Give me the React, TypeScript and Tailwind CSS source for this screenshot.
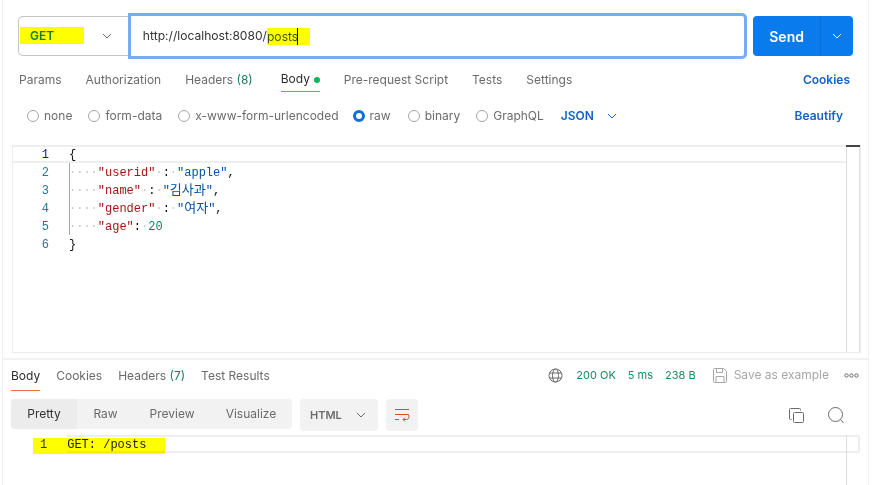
import React from "react";

const mono = "font-['Liberation_Mono','Noto_Sans_CJK_KR',monospace]";

function Chevron({ className = "" }: { className?: string }) {
  return (
    <svg width="10" height="6" viewBox="0 0 10 6" fill="none" className={className}>
      <path d="M1 1l4 4 4-4" stroke="currentColor" strokeWidth="1" />
    </svg>
  );
}

function Radio({ label, checked }: { label: string; checked?: boolean }) {
  return (
    <div className="flex items-center gap-[5px]">
      {checked ? (
        <span className="w-3 h-3 rounded-full border-[3px] border-[#0d6fdc] bg-white" />
      ) : (
        <span className="w-3 h-3 rounded-full border border-[#a6a6a6] bg-white" />
      )}
      <span>{label}</span>
    </div>
  );
}

const Dots = ({ n }: { n: number }) => <span className="text-[#c8c8c8]">{"·".repeat(n)}</span>;
const K = ({ t }: { t: string }) => <span className="text-[#a31515]">{t}</span>;
const S = ({ t }: { t: string }) => <span className="text-[#0451a5]">{t}</span>;
const H = ({ t }: { t: string }) => <span className="text-[#0451a5] text-[13px] leading-[18px]">{t}</span>;

const lines: React.ReactNode[] = [
  <span>{"{"}</span>,
  <>
    <Dots n={4} />
    <K t={'"userid"'} />
    <Dots n={1} />:<Dots n={1} />
    <S t={'"apple"'} />,
  </>,
  <>
    <Dots n={4} />
    <K t={'"name"'} />
    <Dots n={1} />:<Dots n={1} />
    <S t={'"'} />
    <H t="김사과" />
    <S t={'"'} />,
  </>,
  <>
    <Dots n={4} />
    <K t={'"gender"'} />
    <Dots n={1} />:<Dots n={1} />
    <S t={'"'} />
    <H t="여자" />
    <S t={'"'} />,
  </>,
  <>
    <Dots n={4} />
    <K t={'"age"'} />:<Dots n={1} />
    <span className="text-[#098658]">20</span>
  </>,
  <span>{"}"}</span>,
];

export default function App() {
  return (
    <div className="relative w-[878px] h-[485px] bg-white overflow-hidden font-['Inter',sans-serif] text-[#6b6b6b]">
      <div className="ml-[2px] w-[867px] h-full border-x border-[#f0f0f0]">
        {/* request bar */}
        <div className="flex pl-[15px] pr-[15px] pt-[13px] h-[59px]">
          <div className="flex items-center w-[110px] h-[40px] mt-[3px] border border-r-0 border-[#c4c4c4] rounded-l-[5px]">
            <span className="ml-[1px] mt-[-2px] w-[64px] h-[17px] bg-[#ffff00] pl-[10px] text-[12px] leading-[17px] font-semibold text-[#0f7f2d]">
              GET
            </span>
            <Chevron className="ml-[18px] text-[#6b6b6b]" />
          </div>
          <div className="flex items-center w-[620px] h-[46px] pl-[12px] border-[3px] border-[#74aef0] rounded-r-[5px] text-[12.1px] text-[#333]">
            <span>http://localhost:8080/</span>
            <span className="relative bg-[#ffff00] pr-[12px] h-[17px] leading-[17px] text-[#3d5a00]">
              posts
              <span className="absolute left-[30px] top-0 w-px h-[17px] bg-[#111]" />
            </span>
          </div>
          <div className="flex ml-[6px] mt-[3px] w-[100px] h-[40px] rounded-[4px] bg-[#097bed] text-white">
            <div className="w-[68px] flex items-center justify-center text-[14px] font-semibold border-r border-[#0a6fd4]">
              Send
            </div>
            <div className="flex-1 flex items-center justify-center">
              <Chevron />
            </div>
          </div>
        </div>

        {/* request tabs */}
        <div className="flex items-start h-[37px] pl-[16px] pr-[18px] text-[12px] leading-[16px] pt-[13px]">
          <span>Params</span>
          <span className="ml-[24px]">Authorization</span>
          <span className="ml-[24px]">
            Headers <span className="text-[#0f7f5d]">(8)</span>
          </span>
          <div className="ml-[28px] flex items-center justify-between h-[24px] -mt-[4px] border-b border-[#e8734a] w-[39px] self-start">
            <span className="text-[#2b2b2b] mt-[-1px]">Body</span>
            <span className="w-[6px] h-[6px] rounded-full bg-[#0fb35a]" />
          </div>
          <span className="ml-[24px]">Pre-request Script</span>
          <span className="ml-[24px]">Tests</span>
          <span className="ml-[24px]">Settings</span>
          <span className="ml-auto font-semibold text-[#1662c4]">Cookies</span>
        </div>

        {/* body types */}
        <div className="flex items-center h-[38px] pt-[2px] pl-[24px] pr-[25px] text-[12px]">
          <Radio label="none" />
          <div className="ml-[16px]"><Radio label="form-data" /></div>
          <div className="ml-[16px]"><Radio label="x-www-form-urlencoded" /></div>
          <div className="ml-[14px]"><Radio label="raw" checked /></div>
          <div className="ml-[17px]"><Radio label="binary" /></div>
          <div className="ml-[16px]"><Radio label="GraphQL" /></div>
          <span className="ml-[17px] font-semibold text-[#1662c4]">JSON</span>
          <Chevron className="ml-[13px] text-[#1662c4]" />
          <span className="ml-auto font-semibold text-[#1662c4]">Beautify</span>
        </div>

        {/* editor */}
        <div className={`relative ml-[9px] mt-[11px] w-[849px] h-[208px] border border-t-0 border-[#ececec] ${mono} text-[12px] leading-[18px] text-[#111]`}>
          <div className="absolute left-0 right-[13px] top-0 h-[18px] border-y-2 border-[#eeeeee]" />
          <div className="absolute right-0 top-0 w-[14px] h-full border-x border-[#dedede]" />
          <div className="absolute right-0 top-0 w-[14px] h-[2px] bg-[#444]" />
          <div className="absolute left-[56px] top-[18px] h-[72px] w-px bg-[#a8a8a8]" />
          <div className="relative pt-[1px]">
            {lines.map((l, i) => (
              <div key={i} className="flex h-[18px]">
                <span className={`w-[36px] text-right ${i === 0 ? "text-[#0b216f]" : "text-[#237893]"}`}>{i + 1}</span>
                <span className="ml-[20px] whitespace-pre">{l}</span>
              </div>
            ))}
          </div>
        </div>

        {/* divider */}
        <div className="mt-[5px] border-t-2 border-[#f2f2f2]" />

        {/* response tabs */}
        <div className="flex items-start h-[32px] pl-[8px] pr-[9px] text-[12px] leading-[16px]">
          <div className="h-[31px] pt-[8px] border-b border-[#e8734a] text-[#2b2b2b]">Body</div>
          <span className="ml-[16px] mt-[8px]">Cookies</span>
          <span className="ml-[16px] mt-[8px]">
            Headers <span className="text-[#0f7f5d]">(7)</span>
          </span>
          <span className="ml-[16px] mt-[8px]">Test Results</span>
          <div className="ml-auto flex items-center mt-[7px] text-[11px]">
            <svg width="15" height="15" viewBox="0 0 15 15" fill="none" stroke="#6b6b6b" strokeWidth="1">
              <circle cx="7.5" cy="7.5" r="6.5" />
              <ellipse cx="7.5" cy="7.5" rx="3" ry="6.5" />
              <path d="M1.5 5h12M1.5 10h12" />
            </svg>
            <span className="ml-[13px] text-[#1d8a5f]">200 OK</span>
            <span className="ml-[12px] text-[#1d8a5f]">5 ms</span>
            <span className="ml-[12px] text-[#1d8a5f]">238 B</span>
            <svg className="ml-[17px]" width="14" height="15" viewBox="0 0 14 15" fill="none" stroke="#a6a6a6" strokeWidth="1">
              <path d="M.5 1.5a1 1 0 0 1 1-1h9l3 3v10a1 1 0 0 1-1 1h-11a1 1 0 0 1-1-1z" />
              <path d="M3.5.5v4h6v-4M3 14.5v-6h8v6" />
            </svg>
            <span className="ml-[7px] text-[#a6a6a6] text-[12px]">Save as example</span>
            <svg className="ml-[15px]" width="15" height="5" viewBox="0 0 15 5" fill="none" stroke="#6b6b6b" strokeWidth="1">
              <circle cx="2.5" cy="2.5" r="1.7" />
              <circle cx="7.5" cy="2.5" r="1.7" />
              <circle cx="12.5" cy="2.5" r="1.7" />
            </svg>
          </div>
        </div>

        {/* response toolbar */}
        <div className="flex items-start h-[43px] pl-[8px] pr-[24px] pt-[7px] text-[12px]">
          <div className="flex h-[30px] w-[281px] bg-[#f2f2f2] rounded-[4px]">
            <div className="w-[66px] flex items-center justify-center bg-[#ececec] rounded-l-[4px] text-[#333]">Pretty</div>
            <div className="w-[57px] flex items-center justify-center">Raw</div>
            <div className="w-[76px] flex items-center justify-center">Preview</div>
            <div className="flex-1 flex items-center justify-center">Visualize</div>
          </div>
          <div className="ml-[8px] flex items-center h-[32px] w-[78px] pl-[10px] bg-[#f2f2f2] rounded-[4px] text-[11px] font-semibold">
            HTML
            <Chevron className="ml-[14px]" />
          </div>
          <div className="ml-[8px] flex items-center justify-center h-[32px] w-[32px] bg-[#f2f2f2] rounded-[4px]">
            <svg width="16" height="15" viewBox="0 0 16 15" fill="none" stroke="#d4501e" strokeWidth="1">
              <path d="M1 1.5h14M1 6.5h13.5M14.5 6.5c1 2 .5 5-2 5H9M11 9.5l-2 2 2 2M1 11.5h4" />
            </svg>
          </div>
          <svg className="ml-auto mt-[9px]" width="15" height="15" viewBox="0 0 15 15" fill="none" stroke="#6b6b6b" strokeWidth="1">
            <rect x="4.5" y="4.5" width="10" height="10" rx="1" />
            <path d="M2.5 11.5h-1a1 1 0 0 1-1-1v-9a1 1 0 0 1 1-1h9a1 1 0 0 1 1 1v1" />
          </svg>
          <svg className="ml-[24px] mt-[8px]" width="16" height="17" viewBox="0 0 16 17" fill="none" stroke="#6b6b6b" strokeWidth="1">
            <circle cx="7.5" cy="7.5" r="7" />
            <path d="M12.5 12.5l3 3.5" />
          </svg>
        </div>

        {/* response body */}
        <div className={`relative ml-[64px] w-[793px] h-[50px] ${mono} text-[12px] leading-[16px] text-[#111]`}>
          <div className="absolute left-0 right-0 top-0 h-[18px] border-y-2 border-r-2 border-[#eeeeee]" />
          <div className="absolute right-[13px] top-0 h-full w-px bg-[#dedede]" />
        </div>
      </div>

      {/* yellow highlighted response line lies over the code frame */}
      <div className={`absolute left-[33px] top-[438px] w-[132px] h-[16px] bg-[#ffff00] mix-blend-multiply flex ${mono} text-[12px] leading-[14px] text-[#222]`}>
        <span className="ml-[7px] text-[#333]">1</span>
        <span className="ml-[20px]">GET: /posts</span>
      </div>
    </div>
  );
}
